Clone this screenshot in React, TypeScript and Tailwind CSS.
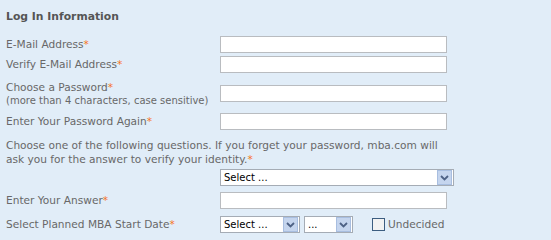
import React from "react";

const font = { fontFamily: '"DejaVu Sans", Verdana, sans-serif' };

function Star() {
  return <span className="text-[#f7741c]">*</span>;
}

function TextBox({ w = "w-[227px]" }: { w?: string }) {
  return <div className={`${w} h-[17px] bg-white border border-[#b9bcc0]`} />;
}

function Chevron() {
  return (
    <svg width="9" height="6" viewBox="0 0 9 6">
      <path d="M1 1 L4.5 4.5 L8 1" fill="none" stroke="#4d6185" strokeWidth="1.8" />
    </svg>
  );
}

function SelectBox({ w, text }: { w: string; text: string }) {
  return (
    <div className={`${w} h-[17px] bg-white border border-[#a5acb5] flex items-center`}>
      <span className="flex-1 pl-[3px] text-[10px] leading-none text-black">{text}</span>
      <div className="w-[15px] h-[15px] mr-px bg-[#c5d5ee] border border-[#a8bee0] flex items-center justify-center">
        <Chevron />
      </div>
    </div>
  );
}

export default function App() {
  return (
    <div className="w-[551px] h-[240px] bg-[#e1edf8] text-[#686868] text-[10.6px]" style={font}>
      <div className="pl-[6px] pt-[10px] flex flex-col">
        <div className="h-[14px] leading-[14px] font-bold text-[#555] text-[10.8px]">Log In Information</div>

        {/* email */}
        <div className="mt-[12px] flex items-center h-[17px]">
          <div className="w-[214px]">
            E-Mail Address<Star />
          </div>
          <TextBox />
        </div>
        <div className="mt-[3px] flex items-center h-[17px]">
          <div className="w-[214px]">
            Verify E-Mail Address<Star />
          </div>
          <TextBox />
        </div>

        {/* password */}
        <div className="mt-[8px] flex items-start">
          <div className="w-[214px] leading-[13px]">
            <div>
              Choose a Password<Star />
            </div>
            <div className="text-[10px]">(more than 4 characters, case sensitive)</div>
          </div>
          <div className="mt-[4px]">
            <TextBox />
          </div>
        </div>
        <div className="mt-[6px] flex items-center h-[17px]">
          <div className="w-[214px]">
            Enter Your Password Again<Star />
          </div>
          <TextBox />
        </div>

        {/* question */}
        <div className="mt-[8px] leading-[14px] w-[450px]">
          <div>Choose one of the following questions. If you forget your password, mba.com will</div>
          <div>
            ask you for the answer to verify your identity.<Star />
          </div>
        </div>
        <div className="mt-[3px] pl-[214px]">
          <SelectBox w="w-[234px]" text="Select ..." />
        </div>
        <div className="mt-[6px] flex items-center h-[17px]">
          <div className="w-[214px]">
            Enter Your Answer<Star />
          </div>
          <TextBox />
        </div>

        {/* start date */}
        <div className="mt-[7px] flex items-center h-[17px]">
          <div className="w-[214px]">
            Select Planned MBA Start Date<Star />
          </div>
          <SelectBox w="w-[80px]" text="Select ..." />
          <div className="ml-[4px]">
            <SelectBox w="w-[49px]" text="..." />
          </div>
          <div className="ml-[19px] w-[13px] h-[13px] bg-[#f2f2f2] border border-[#3c5d80]" />
          <span className="ml-[3px]">Undecided</span>
        </div>
      </div>
    </div>
  );
}
